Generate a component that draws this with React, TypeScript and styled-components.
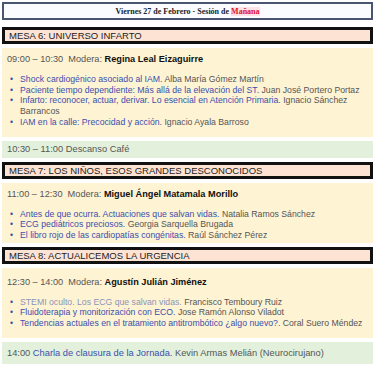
import React from "react";
import styled, { createGlobalStyle } from "styled-components";

const Global = createGlobalStyle`
  html, body { margin: 0; padding: 0; background: #ffffff; }
  body { font-family: "Liberation Sans", Arial, sans-serif; }
`;

const Page = styled.div`
  width: 375px;
  height: 366px;
  overflow: hidden;
  padding: 2px 2px 0 2px;
  box-sizing: border-box;
  display: flex;
  flex-direction: column;
  gap: 4px;
`;

const Header = styled.div`
  flex: none;
  border: 2px solid #4a5570;
  background: #fafcff;
  height: 14px;
  display: flex;
  align-items: center;
  justify-content: center;
  font-family: "Liberation Serif", "Times New Roman", serif;
  font-weight: bold;
  font-size: 8px;
  color: #222;
  margin-bottom: 3px;
`;

const Red = styled.span`
  color: #e0102a;
  background: #fde2e6;
`;

const Mesa = styled.div`
  flex: none;
  border: 3px solid #111;
  background: #fde3d4;
  height: 11px;
  display: flex;
  align-items: center;
  padding-left: 4px;
  font-size: 9.5px;
  color: #222;
`;

const Yellow = styled.div<{ $top: number; $bottom: number }>`
  flex: none;
  background: #fef3d3;
  padding: ${(p) => `${p.$top}px 6px ${p.$bottom}px 5px`};
  font-size: 8.7px;
  line-height: 10.7px;
  color: #555;
`;

const Green = styled.div<{ $height: number }>`
  flex: none;
  background: #e3f1dc;
  height: ${(p) => p.$height}px;
  display: flex;
  align-items: center;
  padding: 0 5px;
  font-size: 9.3px;
  color: #555;
  white-space: nowrap;
`;

const TimeRow = styled.div`
  font-size: 9.2px;
  color: #555;
`;

const Moderator = styled.span`
  color: #111;
  font-weight: bold;
`;

const List = styled.ul`
  list-style: none;
  margin: 9.3px 0 0 0;
  padding: 0;
`;

const Item = styled.li`
  position: relative;
  padding-left: 13px;
  &::before {
    content: "•";
    position: absolute;
    left: 3px;
    top: 0;
    color: #3b4fa8;
  }
`;

const Title = styled.span<{ $muted?: boolean }>`
  color: ${(p) => (p.$muted ? "#8c93b8" : "#3a4fae")};
`;

const Speaker = styled.span`
  color: #555;
`;

type Talk = { title: string; speaker: string; muted?: boolean };

const Session = ({
  time,
  moderator,
  talks,
  top,
  bottom,
}: {
  time: string;
  moderator: string;
  talks: Talk[];
  top: number;
  bottom: number;
}) => (
  <Yellow $top={top} $bottom={bottom}>
    <TimeRow>
      {time}&nbsp; Modera: <Moderator>{moderator}</Moderator>
    </TimeRow>
    <List>
      {talks.map((t) => (
        <Item key={t.title}>
          <Title $muted={t.muted}>{t.title}</Title> <Speaker>{t.speaker}</Speaker>
        </Item>
      ))}
    </List>
  </Yellow>
);

export default function App() {
  return (
    <>
      <Global />
      <Page>
        <Header>
          <span>
            Viernes 27 de Febrero - Sesión de <Red>Mañana</Red>
          </span>
        </Header>
        <Mesa>MESA 6: UNIVERSO INFARTO</Mesa>
        <Session
          top={6}
          bottom={9}
          time="09:00 – 10:30"
          moderator="Regina Leal Eizaguirre"
          talks={[
            { title: "Shock cardiogénico asociado al IAM.", speaker: "Alba María Gómez Martín" },
            { title: "Paciente tiempo dependiente: Más allá de la elevación del ST.", speaker: "Juan José Portero Portaz" },
            { title: "Infarto: reconocer, actuar, derivar. Lo esencial en Atención Primaria.", speaker: "Ignacio Sánchez Barrancos" },
            { title: "IAM en la calle: Precocidad y acción.", speaker: "Ignacio Ayala Barroso" },
          ]}
        />
        <Green $height={17}>10:30 – 11:00 Descanso Café</Green>
        <Mesa>MESA 7: LOS NIÑOS, ESOS GRANDES DESCONOCIDOS</Mesa>
        <Session
          top={6}
          bottom={2}
          time="11:00 – 12:30"
          moderator="Miguel Ángel Matamala Morillo"
          talks={[
            { title: "Antes de que ocurra. Actuaciones que salvan vidas.", speaker: "Natalia Ramos Sánchez" },
            { title: "ECG pediátricos preciosos.", speaker: "Georgia Sarquella Brugada" },
            { title: "El libro rojo de las cardiopatías congénitas.", speaker: "Raúl Sánchez Pérez" },
          ]}
        />
        <Mesa>MESA 8: ACTUALICEMOS LA URGENCIA</Mesa>
        <Session
          top={9}
          bottom={9}
          time="12:30 – 14:00"
          moderator="Agustín Julián Jiménez"
          talks={[
            { title: "STEMI oculto. Los ECG que salvan vidas.", speaker: "Francisco Temboury Ruiz", muted: true },
            { title: "Fluidoterapia y monitorización con ECO.", speaker: "Jose Ramón Alonso Viladot" },
            { title: "Tendencias actuales en el tratamiento antitrombótico ¿algo nuevo?.", speaker: "Coral Suero Méndez" },
          ]}
        />
        <Green $height={22}>
          14:00&nbsp;<Title>Charla de clausura de la Jornada.</Title>&nbsp;Kevin Armas Melián (Neurocirujano)
        </Green>
      </Page>
    </>
  );
}
